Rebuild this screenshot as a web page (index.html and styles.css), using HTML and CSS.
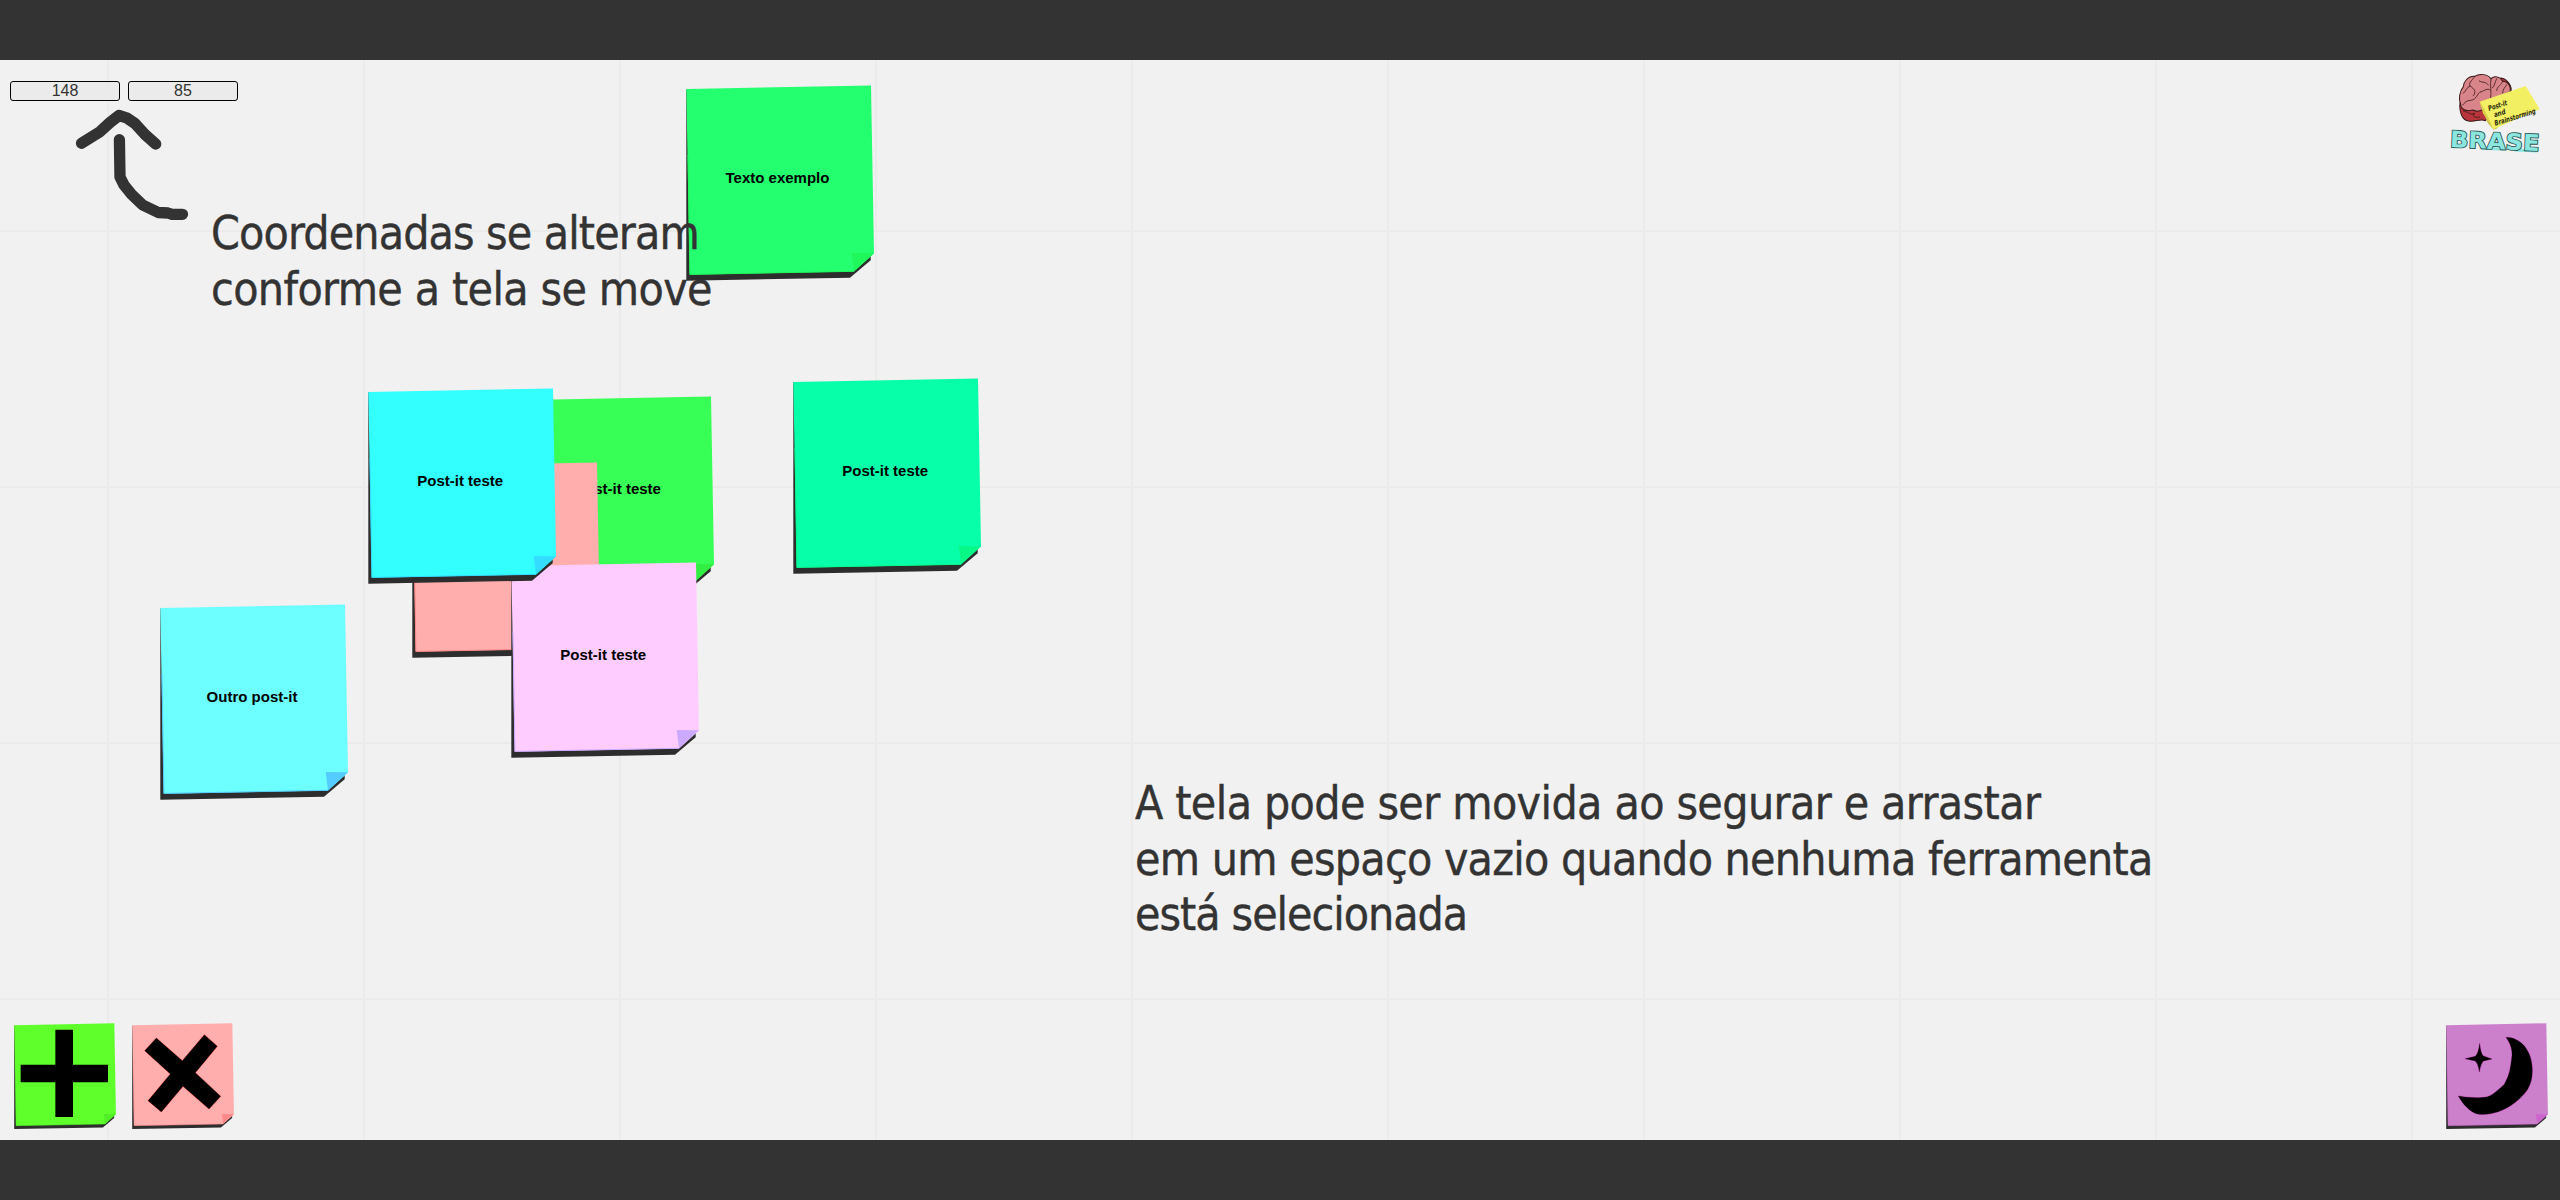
FILE: index.html
```html
<!DOCTYPE html>
<html lang="pt-BR">
<head>
<meta charset="utf-8">
<title>BRASE</title>
<link rel="stylesheet" href="styles.css">
</head>
<body>
<svg class="defs" aria-hidden="true">
  <symbol id="postit" viewBox="0 0 190 198">
    <path fill="#2d2d2d" d="M.3 4L.3 195.7 164 192.7 184.7 175.3V168z"/>
    <path fill="currentColor" d="M.3 4L185 .5 188 168.5 168 186.5 3.7 189.7z"/>
    <path class="edge" d="M2 70L3.9 189.4 168 186.3"/>
    <path class="fold" d="M165.7 168L188 168.3 168 186.5z"/>
  </symbol>
</svg>
<main class="board">
  <div class="notes">
    <div class="note green"><svg><use href="#postit"/></svg><span>Post-it teste</span></div>
    <div class="note pink"><svg><use href="#postit"/></svg></div>
    <div class="note lilac"><svg><use href="#postit"/></svg><span>Post-it teste</span></div>
    <div class="note cyan"><svg><use href="#postit"/></svg><span>Post-it teste</span></div>
    <div class="note sky"><svg><use href="#postit"/></svg><span>Outro post-it</span></div>
    <div class="note emerald"><svg><use href="#postit"/></svg><span>Texto exemplo</span></div>
    <div class="note teal"><svg><use href="#postit"/></svg><span>Post-it teste</span></div>
    <svg class="arrow" viewBox="70 105 125 120">
      <path d="M81.5 143.3L100 131.7 110 122.5 119 115.5 126.5 117.8 135 123.5 145 134.5 155.7 144"/>
      <path d="M119.4 139.7L120 177 124 185 131.7 194.5 142.7 205 158.3 212.5 168 213 172 214.3 182.5 214.3"/>
    </svg>
    <p class="hint hint-coords"><span class="c1">Coordenadas se alteram</span><span class="c2">conforme a tela se move</span></p>
    <p class="hint hint-pan"><span class="p1">A tela pode ser movida ao segurar e arrastar</span><span class="p2">em um espaço vazio quando nenhuma ferramenta</span><span class="p3">está selecionada</span></p>
  </div>
  <header class="top">
    <div class="coords"><output>148</output><output>85</output></div>
    <svg class="logo" viewBox="80 60 290 260">
      <g stroke="#3a1918" stroke-width="3" stroke-linejoin="round" stroke-linecap="round">
        <path fill="#b8353c" d="M122 158C119 185 128 211 148 213 165 217 183 205 198 212L214 190 274 128C281 108 262 86 245 84z"/>
        <path fill="#d88488" d="M215 86C206 72 180 70 166 79 145 78 133 95 132 110 120 125 117 148 124 162 123 176 138 186 160 180 178 188 190 182 198 168L238 140 272 125C276 107 264 93 250 94 241 78 224 77 215 86z"/>
        <path fill="none" stroke-width="2.4" d="M215 86C211 106 217 125 214 143M166 79C162 90 147 95 152 108 142 112 140 123 132 130M152 108C166 117 172 125 162 137M180 93C190 99 200 94 207 105M183 126C172 130 174 148 154 151 141 151 135 159 130 165M184 126C196 122 205 113 212 120M232 86C226 98 226 108 219 114M250 94C247 106 235 105 232 121M262 104C258 112 249 118 250 129M132 183C146 185 151 196 166 191M163 190C158 200 170 205 181 201"/>
      </g>
      <path fill="#c7be48" d="M181 155L205 219 223 239 236 234 214 210z"/>
      <path fill="#dbcf4b" d="M181 155L191 190 223 239 228 220 202 165z"/>
      <path fill="#f2ef62" d="M181 155L319 108 361 177 222 238C211 211 198 179 181 155z"/>
      <g class="scribble">
        <text transform="translate(209 183) rotate(-18)" textLength="59" lengthAdjust="spacingAndGlyphs">Post-it</text>
        <text transform="translate(226 202) rotate(-18)" textLength="36" lengthAdjust="spacingAndGlyphs">and</text>
        <text transform="translate(228 227) rotate(-17)" textLength="128" lengthAdjust="spacingAndGlyphs">Brainstorming</text>
      </g>
      <path class="brandline" d="M188 295L257 298M285 300L353 303"/>
      <text class="brand" transform="translate(91 291) rotate(2.5)" textLength="269" lengthAdjust="spacingAndGlyphs">BRASE</text>
    </svg>
  </header>
  <footer class="tools">
    <svg class="tool lime" viewBox="43 68 305 318">
      <use href="#postit" x="43" y="68" width="309" height="322"/>
      <path d="M167 88h53v105h105v53H220v104h-53V246H63v-53h104z"/>
    </svg>
    <svg class="tool rose" viewBox="396 68 305 318">
      <use href="#postit" x="396" y="68" width="309" height="322"/>
      <path stroke="#f33" stroke-width="2" paint-order="stroke" d="M469 113L547 181 613 103 652 138 586 217 662 288 627 326 549 258 484 335 444 301 511 221 434 151z"/>
    </svg>
    <svg class="tool orchid" viewBox="80 68 305 318">
      <use href="#postit" x="80" y="68" width="309" height="322"/>
      <g stroke="#b0209c" stroke-width="2" paint-order="stroke">
        <path d="M260 111C304 111 339 151 339 210 339 258 319 282 284 309 250 334 217 344 178 342 153 337 130 311 117 287 147 292 190 295 208 288 224 281 240 265 254 253 269 228 273 210 278 165 279 143 270 125 260 111z"/>
        <path d="M181 129Q184 160 192 167L218 176 192 182Q184 190 180 215 177 190 168 182L137 175 168 168Q177 160 181 129z"/>
      </g>
    </svg>
  </footer>
</main>
</body>
</html>
```
FILE: styles.css
```css
* { box-sizing: border-box; }

body {
  margin: 0;
  height: 1200px;
  padding: 60px 0;
  background: #333;
  overflow: hidden;
  font-family: "Liberation Sans", Arial, sans-serif;
}

.defs { position: absolute; width: 0; height: 0; }

.board {
  position: relative;
  height: 1080px;
  display: flex;
  flex-direction: column;
  justify-content: space-between;
  overflow: hidden;
  background:
    linear-gradient(90deg, #ebebeb 2px, transparent 2px) 107px 0 / 256px 256px,
    linear-gradient(#ebebeb 2px, transparent 2px) 0 170px / 256px 256px,
    #f1f1f1;
}

.notes { position: absolute; left: 0; top: -60px; }

/* Post-its sit at free positions on the canvas */
.note {
  position: absolute;
  width: 190px;
  height: 198px;
  display: flex;
  justify-content: center;
  padding: 84px 6px 0 0;
  font-size: 15px;
  font-weight: bold;
  line-height: 17px;
  color: var(--paper);
}
.note svg { position: absolute; left: 0; top: 0; width: 190px; height: 198px; }
.note span { position: relative; color: #000; white-space: nowrap; }

.edge { fill: none; stroke: var(--fold); stroke-width: 1; }
.fold { fill: var(--fold); }

.green { left: 526px; top: 395.5px; --paper: #38ff55; --fold: #32ee42; }
.pink { left: 411.5px; top: 461.5px; --paper: #ffadad; --fold: #ff8888; }
.lilac { left: 511.3px; top: 561.5px; --paper: #ffccff; --fold: #ccaaff; }
.cyan { left: 368.2px; top: 387.5px; --paper: #33ffff; --fold: #33ddff; }
.sky { left: 160px; top: 604px; --paper: #6dffff; --fold: #55ccff; }
.emerald { left: 685.5px; top: 84.5px; --paper: #24ff70; --fold: #20f75a; }
.teal { left: 793.2px; top: 377.5px; --paper: #08ffaa; --fold: #08f888; }

.arrow {
  position: absolute;
  left: 70px;
  top: 105px;
  width: 125px;
  height: 120px;
  fill: none;
  stroke: #333;
  stroke-width: 11.3;
  stroke-linecap: round;
  stroke-linejoin: round;
}

.hint {
  position: absolute;
  margin: 0;
  font: 46px/55.5px "DejaVu Sans Condensed", "DejaVu Sans", sans-serif;
  font-stretch: condensed;
  color: #333;
  -webkit-text-stroke: .4px #333;
  white-space: nowrap;
}
.hint span { display: block; }
.hint-coords { left: 211px; top: 206px; }
.hint-pan { left: 1135px; top: 776px; }
.c1 { letter-spacing: -.86px; }
.c2 { letter-spacing: -.62px; }
.p1 { letter-spacing: -.6px; }
.p2 { letter-spacing: -.74px; }
.p3 { letter-spacing: -1.03px; }

.top {
  position: relative;
  display: flex;
  justify-content: space-between;
  align-items: flex-start;
  padding: 10px 17px 0 10px;
}
.coords { display: flex; gap: 8px; padding-top: 11px; }
.coords output {
  width: 110px;
  height: 20px;
  border: 1px solid #000;
  border-radius: 3px;
  background: #ebebeb;
  font-size: 16px;
  line-height: 18px;
  text-align: center;
  color: #333;
}
.logo { width: 96.7px; height: 86.7px; overflow: visible; }
.scribble { font: bold italic 22px "DejaVu Sans", sans-serif; fill: #2b2a10; }
.brand {
  font: bold 68px "DejaVu Sans", sans-serif;
  fill: #8be6df;
  stroke: #2a5557;
  stroke-width: 5;
  paint-order: stroke;
}
.brandline { fill: none; stroke: #8be6df; stroke-width: 9; }

.tools {
  position: relative;
  display: flex;
  align-items: flex-end;
  gap: 16px;
  padding: 0 12px 11px 14.4px;
}
.tool { width: 101.7px; height: 106px; overflow: visible; }
.tool use { color: var(--paper); }
.lime { --paper: #5fff2b; --fold: #50ee28; }
.rose { --paper: #ffadad; --fold: #ff8888; }
.orchid { --paper: #cc80cc; --fold: #cc66cc; margin-left: auto; }
```
